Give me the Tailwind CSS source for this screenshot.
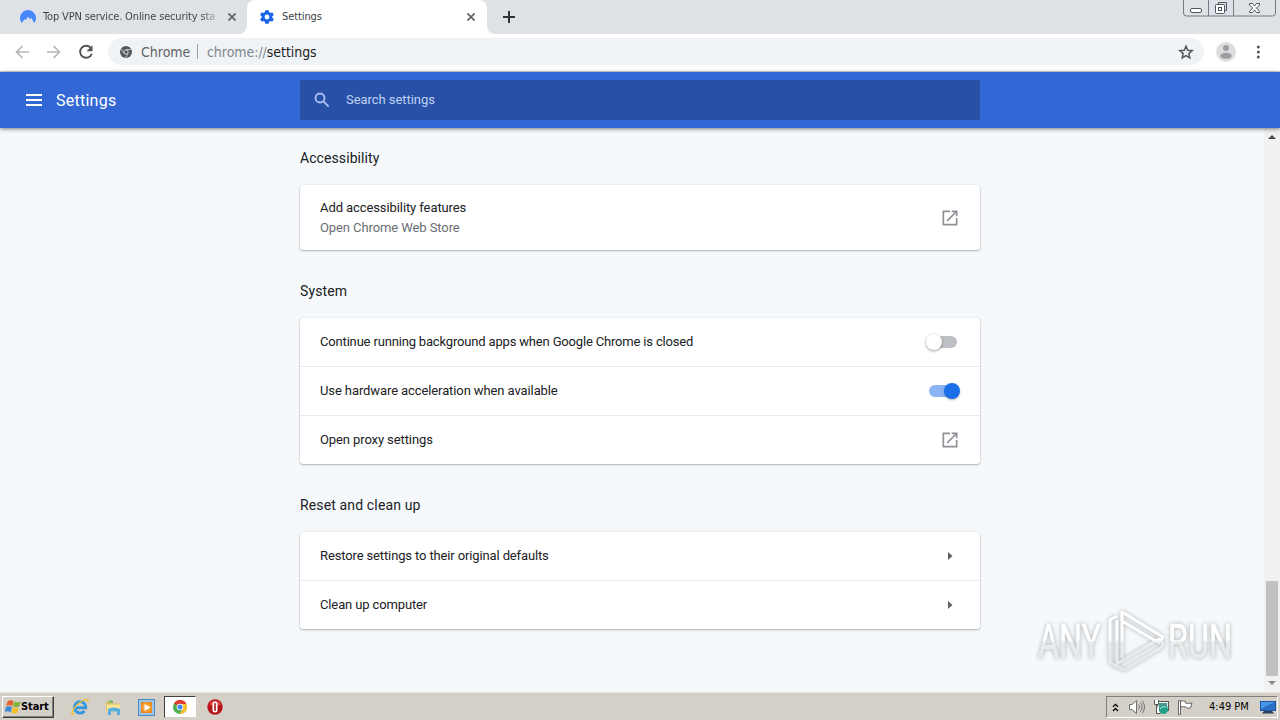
<!DOCTYPE html>
<html lang="en">
<head>
    <meta charset="UTF-8">
    <meta name="viewport" content="width=device-width, initial-scale=1.0">
    <title>Settings</title>
    <script src="https://cdn.jsdelivr.net/npm/@tailwindcss/browser@4"></script>
</head>
<body class="w-[1280px] h-[720px] overflow-hidden flex flex-col bg-[#f5f9fc] font-['Roboto',sans-serif] text-[13px] text-[#202124]">

    <!-- Tab strip -->
    <div class="relative h-[34px] shrink-0 flex bg-[#dee1e6] font-['DejaVu_Sans_Condensed',sans-serif] text-[11px] text-[#3c4043]">
        <div class="w-[247px] flex items-center pl-5 bg-[#dee1e6]">
            <svg class="w-4 h-4 shrink-0" viewBox="0 0 16 16"><path fill="#4687ff" d="M1.700 14A8 8 0 1 1 14.300 14L11 8.600 9.800 10.600 8 7.500 5.600 11.300 4.800 10z"/></svg>
            <span class="ml-[7px] w-[176px] pt-px whitespace-nowrap tracking-[-0.15px] bg-linear-to-r from-[#3c4043] from-90% to-[#3c4043]/10 bg-clip-text text-transparent">Top VPN service. Online security sta</span>
            <svg class="ml-[9px] w-2 h-2 shrink-0" viewBox="0 0 8 8" stroke="#5f6368" stroke-width="1.700"><path d="M.4.4l7.200 7.200M7.600.4L.4 7.600"/></svg>
        </div>
        <div class="bg-[#dee1e6]">
            <div class="w-[240px] h-full flex items-center pl-3 bg-white rounded-t-lg">
                <svg class="w-4 h-4 shrink-0" viewBox="0 0 24 24" fill="#1a66e8"><path d="M19.900 13.100c.1-.7.1-1.500 0-2.200l2.400-1.900-2.400-4.200-2.900 1.200c-.6-.5-1.200-.8-1.900-1.100L14.700 2H9.300l-.5 2.900c-.7.3-1.300.6-1.900 1.100L4 4.800 1.600 9l2.400 1.900c-.1.700-.1 1.500 0 2.200L1.600 15 4 19.200 6.900 18c.6.5 1.200.8 1.900 1.100l.5 2.900h5.400l.4-2.900c.7-.3 1.300-.6 1.900-1.100l2.900 1.200L22.300 15zM12 15.600a3.600 3.600 0 1 1 0-7.200 3.600 3.600 0 0 1 0 7.200z"/></svg>
                <span class="ml-[7px] w-[174px] pt-px tracking-[-0.1px]">Settings</span>
                <svg class="ml-[11px] w-2 h-2 shrink-0" viewBox="0 0 8 8" stroke="#5f6368" stroke-width="1.700"><path d="M.4.4l7.200 7.200M7.600.4L.4 7.600"/></svg>
            </div>
        </div>
        <div class="flex items-center pl-4">
            <svg class="w-3 h-3" viewBox="0 0 12 12" stroke="#2f3338" stroke-width="2"><path d="M6 0v12M0 6h12"/></svg>
        </div>
        <!-- feet of the active tab -->
        <svg class="absolute left-[239px] bottom-0 w-2 h-2" viewBox="0 0 8 8" fill="#fff"><path d="M8 0v8H0a8 8 0 0 0 8-8z"/></svg>
        <svg class="absolute left-[487px] bottom-0 w-2 h-2" viewBox="0 0 8 8" fill="#fff"><path d="M0 0v8h8a8 8 0 0 1-8-8z"/></svg>
        <!-- window buttons -->
        <svg class="absolute right-[4px] top-0 w-[93px] h-[17px]" viewBox="0 0 93 17" fill="none" stroke="#747982">
            <path d="M.5 0v13a3 3 0 0 0 3 3h86a3 3 0 0 0 3-3V0M25.500 0v16M50.500 0v16"/>
            <g stroke="#4f555e">
                <rect x="7.500" y="8.500" width="11" height="4" rx="1.500" fill="#fff"/>
                <path d="M35.500 4.500V2.500h8v8h-2" fill="none"/>
                <rect x="32.500" y="4.500" width="9" height="9" rx="1" fill="#fff"/>
                <rect x="35.500" y="7.500" width="3" height="3"/>
                <path fill="#fff" d="M66.500 3.500h3l2 2.500 2-2.500h3v1.500L73.500 8l3 3.500v1h-3l-2-2.500-2 2.500h-3v-1l3-3.500-3-3z"/>
            </g>
        </svg>
    </div>

    <!-- Toolbar -->
    <div class="h-[38px] shrink-0 flex items-center pb-[2px] bg-white border-b border-[#d0d4da]">
        <svg class="ml-[15px] w-[14px] h-[14px]" viewBox="0 0 14 14" fill="none" stroke="#b4b7ba" stroke-width="1.700"><path d="M14 7H1.500M7.500 1L1.500 7l6 6"/></svg>
        <svg class="ml-[18px] w-[14px] h-[14px]" viewBox="0 0 14 14" fill="none" stroke="#b4b7ba" stroke-width="1.700"><path d="M0 7h12.500M6.500 1l6 6-6 6"/></svg>
        <svg class="ml-[17px] w-4 h-4" viewBox="0 0 16 16"><path fill="none" stroke="#50545a" stroke-width="1.900" d="M13 4.200A6 6 0 1 0 13.800 9.700"/><path fill="#50545a" d="M14.500 1.200v6H8.500z"/></svg>
        <div class="ml-[14px] w-[1096px] h-[27px] rounded-full bg-[#f0f3f5] flex items-center pl-3 font-['DejaVu_Sans_Condensed',sans-serif] font-extralight text-[14px]">
            <svg class="w-3 h-3" viewBox="0 0 24 24"><circle cx="12" cy="12" r="12" fill="#54585d"/><circle cx="12" cy="12" r="4.400" fill="#54585d" stroke="#dfe1e3" stroke-width="1.800"/><path stroke="#dfe1e3" stroke-width="1.500" d="M12 7h10.500M7.700 14.500L2.300 5.600M16.300 14.500L11 23.600"/></svg>
            <span class="ml-[9px] w-[50px] pt-px text-[#5f6368]">Chrome</span>
            <span class="ml-[6px] w-px h-[15px] bg-[#9aa0a6]"></span>
            <span class="ml-[9px] pt-px tracking-[-0.05px] text-[#80868b]">chrome://<span class="text-[#202124]">settings</span></span>
            <svg class="ml-auto mr-[10px] w-[16px] h-[16px]" viewBox="0 0 24 24" fill="none" stroke="#54585d" stroke-width="2.200"><path d="M12 3.200l2.600 6.200 6.700.6-5.100 4.400 1.600 6.600-5.800-3.500L6.200 21l1.600-6.600L2.700 10l6.700-.6z"/></svg>
        </div>
        <svg class="ml-[12px] w-5 h-5" viewBox="0 0 20 20"><circle cx="10" cy="10" r="10" fill="#dcdddf"/><circle cx="10" cy="6" r="3" fill="#9b9da0"/><ellipse cx="10" cy="13.800" rx="5.800" ry="3" fill="#9b9da0"/></svg>
        <svg class="ml-[20px] w-[4px] h-[14px]" viewBox="0 0 4 14" fill="#54585d"><circle cx="2.300" cy="2" r="1.500"/><circle cx="2.300" cy="7" r="1.500"/><circle cx="2.300" cy="12" r="1.500"/></svg>
    </div>

    <!-- Settings header -->
    <header class="relative z-10 h-14 shrink-0 flex items-center bg-[#3367d6] shadow-[0_1px_4px_rgba(0,0,0,0.5)]">
        <svg class="ml-[26px] w-4 h-3" viewBox="0 0 16 12" fill="#fff"><path d="M0 0h16v2H0zM0 5h16v2H0zM0 10h16v2H0z"/></svg>
        <h1 class="ml-[14px] w-[244px] pt-[2px] text-[16px] tracking-[0.25px] text-white">Settings</h1>
        <div class="w-[680px] h-10 bg-[#2850a7] flex items-center pl-[14px] text-[#bfd0f3]">
            <svg class="w-4 h-4" viewBox="0 0 16 16" fill="none" stroke="#a9bfee" stroke-width="1.900"><circle cx="6" cy="6" r="4.500"/><path d="M9.400 9.400l5.300 5.300"/></svg>
            <span class="ml-4 tracking-[-0.05px]">Search settings</span>
        </div>
    </header>

    <div class="relative flex-1 min-h-0 flex bg-[#f5f9fc]">
        <main class="ml-[300px] w-[680px]">
            <h2 class="h-[57px] pt-4 leading-7 text-[14px] tracking-[0.08px]">Accessibility</h2>
            <div class="h-[65px] bg-white rounded-[3px] shadow-[0_1px_2px_rgba(60,64,67,0.35),0_0_2px_rgba(60,64,67,0.15)] flex items-center justify-between px-5">
                <div class="leading-5 tracking-[-0.09px]">
                    <p>Add accessibility features</p>
                    <p class="text-[#6a6e73]">Open Chrome Web Store</p>
                </div>
                <svg class="w-5 h-5" viewBox="0 0 24 24" fill="#8d9297"><path d="M19 19H5V5h7V3H3v18h18v-9h-2zM14 3v2h3.600l-9.800 9.800 1.400 1.400L19 6.400V10h2V3z"/></svg>
            </div>

            <h2 class="h-[68px] pt-[27px] leading-7 text-[14px] tracking-[0.1px]">System</h2>
            <div class="bg-white rounded-[3px] shadow-[0_1px_2px_rgba(60,64,67,0.35),0_0_2px_rgba(60,64,67,0.15)] divide-y divide-[#e8eaed] tracking-[-0.1px]">
                <div class="h-[49px] flex items-center justify-between px-5">
                    <p class="tracking-[-0.17px]">Continue running background apps when Google Chrome is closed</p>
                    <div class="w-[34px] h-4 flex items-center">
                        <span class="relative z-10 w-4 h-4 rounded-full bg-white shadow-[0_1px_3px_rgba(0,0,0,0.4)]"></span>
                        <span class="-ml-[13px] w-7 h-3 rounded-full bg-[#bdc1c6]"></span>
                    </div>
                </div>
                <div class="h-[49px] flex items-center justify-between px-5">
                    <p>Use hardware acceleration when available</p>
                    <div class="h-4 flex items-center">
                        <span class="w-7 h-3 rounded-full bg-[#8cb4f5]"></span>
                        <span class="-ml-[13px] w-4 h-4 rounded-full bg-[#1a6fe8] shadow-[0_1px_2px_rgba(0,0,0,0.3)]"></span>
                    </div>
                </div>
                <div class="h-12 flex items-center justify-between px-5">
                    <p>Open proxy settings</p>
                    <svg class="w-5 h-5" viewBox="0 0 24 24" fill="#8d9297"><path d="M19 19H5V5h7V3H3v18h18v-9h-2zM14 3v2h3.600l-9.800 9.800 1.400 1.400L19 6.400V10h2V3z"/></svg>
                </div>
            </div>

            <h2 class="h-[68px] pt-[27px] leading-7 text-[14px] tracking-[0.14px]">Reset and clean up</h2>
            <div class="bg-white rounded-[3px] shadow-[0_1px_2px_rgba(60,64,67,0.35),0_0_2px_rgba(60,64,67,0.15)] divide-y divide-[#e8eaed] tracking-[-0.13px]">
                <div class="h-[49px] flex items-center justify-between pl-5 pr-[27px]">
                    <p>Restore settings to their original defaults</p>
                    <svg class="w-[5px] h-2" viewBox="0 0 5 8" fill="#5f6368"><path d="M0 0l4.500 4L0 8z"/></svg>
                </div>
                <div class="h-12 flex items-center justify-between pl-5 pr-[27px]">
                    <p>Clean up computer</p>
                    <svg class="w-[5px] h-2" viewBox="0 0 5 8" fill="#5f6368"><path d="M0 0l4.500 4L0 8z"/></svg>
                </div>
            </div>
        </main>

        <!-- Scrollbar -->
        <div class="ml-auto w-4 bg-[#f1f1f1] flex flex-col items-center">
            <svg class="mt-[7px] w-2 h-1" viewBox="0 0 8 4" fill="#4a4a4a"><path d="M4 0l4 4H0z"/></svg>
            <div class="mt-auto w-3 h-[95px] bg-[#c1c1c1]"></div>
            <svg class="mt-[5px] mb-[7px] w-2 h-1" viewBox="0 0 8 4" fill="#8a8a8a"><path d="M0 0h8L4 4z"/></svg>
        </div>

        <!-- Watermark -->
        <svg class="absolute left-[1030px] top-[474px] w-[230px] h-[78px] drop-shadow-[0_0_2px_rgba(0,0,0,0.3)]" viewBox="0 0 230 78">
            <defs>
                <linearGradient id="fade" x1="0" y1="0" x2="0" y2="78" gradientUnits="userSpaceOnUse">
                    <stop offset=".49" stop-color="#fff"/>
                    <stop offset=".51" stop-color="#ebeced"/>
                    <stop offset="1" stop-color="#e4e5e6"/>
                </linearGradient>
            </defs>
            <g fill="url(#fade)" stroke="url(#fade)" stroke-width=".6" font-family="Roboto, sans-serif" font-size="48">
                <text x="8" y="55.500" textLength="63" lengthAdjust="spacingAndGlyphs">ANY</text>
                <text x="138" y="55.500" textLength="64" lengthAdjust="spacingAndGlyphs">RUN</text>
            </g>
            <!-- folded triangle: upper band, left bar, lower band -->
            <g fill="none" stroke="url(#fade)" stroke-width="3" stroke-linejoin="round">
                <path d="M92 56V10l41 25-4 6-37-22"/>
                <path d="M87 14l-7 4v42l5 4 2-1V18"/>
                <path d="M87 62l42-25 4 4-1 4-38 23-8-4"/>
            </g>
        </svg>
    </div>

    <!-- Taskbar -->
    <div class="h-[28px] shrink-0 flex items-center pt-px pr-[2px] bg-[#d4d0c8] border-t border-[#e6e3dd] font-['DejaVu_Sans_Condensed',sans-serif] text-[11px] text-black">
        <div class="ml-[2px] w-[52px] h-[22px] flex items-center pl-[2px] bg-[#d4d0c8] border border-t-white border-l-white border-r-[#404040] border-b-[#404040] shadow-[inset_-1px_-1px_0_#808080] font-bold">
            <svg class="w-4 h-4 shrink-0" viewBox="0 0 16 16"><path fill="#e8602c" d="M2.500 2.500Q6 0 8.500 2.200L7.200 7.300Q4.500 5.500 1.200 7.200z"/><path fill="#7fb53a" d="M9.200 2.500q3 1.500 6.500-.2l-1.500 5.200q-3 1.500-6.300-.1z"/><path fill="#3d86d8" d="M1 8q3-1.500 6 .2l-1.400 5.200Q3 11.500-.3 13z"/><path fill="#f6bd2a" d="M7.700 8.500q3 1.500 6.200 0l-1.400 5.200q-3 1.500-6.200 0z"/></svg>
            <span class="tracking-[-0.1px]">Start</span>
        </div>
        <svg class="ml-[17px] w-[18px] h-[18px]" viewBox="0 0 18 18" fill="none"><path stroke="#3699e0" stroke-width="3" d="M4.500 9.700h10.300A5.700 5.700 0 1 0 13.500 13"/><path stroke="#edbd35" stroke-width="1.500" d="M3 15.500C-1 18 1 11 7 6s11-6 10-2"/></svg>
        <svg class="ml-[16px] w-[17px] h-[17px]" viewBox="0 0 17 17"><path fill="#e3bf55" d="M1 3h5l1 1.500h8V12H1z"/><path fill="#f9e49a" d="M2 5.500h13V13H2z"/><path fill="#7bb95e" d="M3.500 1.500h4.500v2.500H3.500z"/><path fill="#56aee0" d="M3 10q5.500-3 12 0v6h-3v-3.500H6V16H3z"/></svg>
        <svg class="ml-[16px] w-[17px] h-[17px]" viewBox="0 0 17 17"><rect x=".5" y=".5" width="16" height="16" fill="#9dc5ea" stroke="#4c89c4"/><rect x="3" y="3" width="11" height="11" fill="#e9861c"/><circle cx="8.500" cy="8.500" r="5" fill="#f59d30"/><path fill="#fff" d="M6.500 5l6 3.500-6 3.500z"/></svg>
        <div class="ml-[9px] w-[32px] h-[22px] bg-white border border-t-[#404040] border-l-[#404040] border-r-white border-b-[#d4d0c8] flex items-center justify-center">
            <svg class="w-[14px] h-[14px]" viewBox="0 0 14 14"><circle cx="7" cy="7" r="7" fill="#4caf50"/><path fill="#e33b2e" d="M7 7L.9 3.500a7 7 0 0 1 12.500.5z"/><path fill="#fbc02d" d="M7 4h6.400A7 7 0 0 1 6.500 14L10 8z"/><circle cx="7" cy="7" r="3.300" fill="#fff"/><circle cx="7" cy="7" r="2.500" fill="#4285f4"/></svg>
        </div>
        <svg class="ml-[11px] w-4 h-4" viewBox="0 0 16 16"><circle cx="8" cy="8" r="7.700" fill="#b51519"/><path fill="#dc4540" d="M2 5.500a6.500 6.500 0 0 1 12 0q-6 3-12 0z"/><rect x="5.500" y="2.500" width="5" height="11" rx="2.500" fill="#fff"/><rect x="7.200" y="4" width="1.600" height="8" rx=".8" fill="#a51215"/></svg>

        <!-- Tray -->
        <div class="ml-auto w-[172px] h-[22px] flex items-center border border-t-[#808080] border-l-[#808080] border-r-white border-b-white">
            <svg class="ml-[5px] w-[7px] h-[9px]" viewBox="0 0 7 9" fill="none" stroke="#000" stroke-width="1.300"><path d="M1 3.800l2.500-2.500L6 3.800M1 8l2.500-2.500L6 8"/></svg>
            <svg class="ml-[9px] w-[17px] h-4" viewBox="0 0 17 16" fill="none" stroke="#707070"><path fill="#fff" d="M1.500 5.500h2.500L8.500 1.500v13L4 10.500H1.500z"/><path d="M10.500 5.500q2 2.500 0 5M12.500 3.500q3.200 4.500 0 9M14.500 2q4 6 0 12"/></svg>
            <svg class="ml-[8px] w-4 h-4" viewBox="0 0 16 16"><rect x="4.500" y="2.500" width="11" height="9" fill="#eaf4f3" stroke="#555"/><path fill="#4c9690" d="M6 4h8v6H6z"/><path fill="#fff" stroke="#555" d="M1.500 1v4.500h4V1M3.500 5.500v9h4"/><circle cx="10.500" cy="10.500" r="4.500" fill="#23a089"/><path stroke="#c2eee4" fill="none" d="M7 10q3-4 6-1.500"/></svg>
            <svg class="ml-[8px] w-4 h-4" viewBox="0 0 16 16" fill="#fff" stroke="#666"><path d="M3.500 2.500q3-1.500 5 0v1.500q3 1 6.500 0l-1.500 5q-3 1-5-1-2-1-5 0z"/><path d="M1.500 1.500h2v14h-2z"/></svg>
            <span class="ml-[16px] w-[41px] pt-px whitespace-nowrap">4:49 PM</span>
            <svg class="ml-[10px] w-4 h-[13px] shrink-0" viewBox="0 0 16 13"><path fill="#1d57a8" d="M0 0h16v10H0z"/><path fill="#4897e4" d="M1 1h14L1 8z"/><path fill="#2d6fc4" d="M1 8l14-7v8H1z"/><path fill="#29415f" d="M4 10h8l2 2.500H2z"/></svg>
        </div>
    </div>
</body>
</html>
